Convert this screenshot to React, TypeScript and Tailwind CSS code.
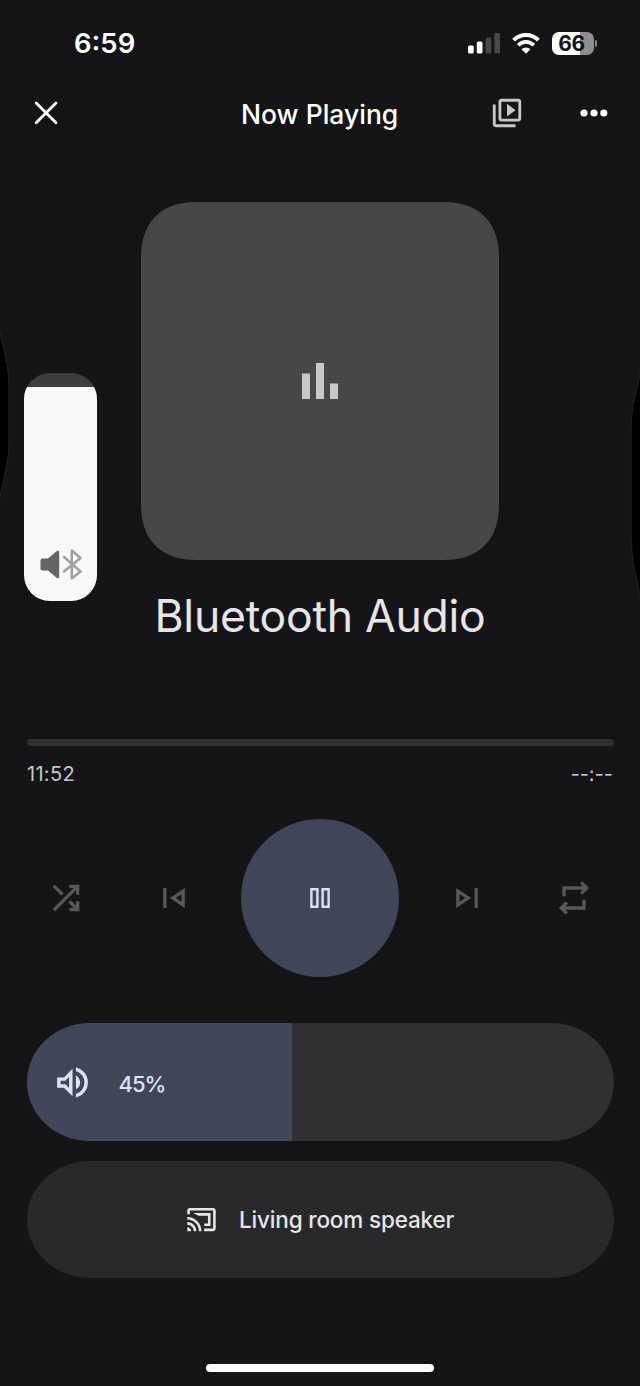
import type { ReactNode } from "react";

const MaterialIcon = ({ size, path, className = "" }: { size: number; path: string; className?: string }) => (
  <svg width={size} height={size} viewBox="0 -960 960 960" fill="currentColor" className={className}>
    <path d={path} />
  </svg>
);

const icons = {
  shuffle:
    "M560-160v-80h104L537-367l57-57 126 126v-102h80v240H560Zm-344 0-56-56 504-504H560v-80h240v240h-80v-104L216-160Zm151-377L160-744l56-56 207 207-56 56Z",
  previous: "M220-240v-480h80v480h-80Zm520 0L380-480l360-240v480Zm-80-240Zm0 90v-180l-136 90 136 90Z",
  next: "M660-240v-480h80v480h-80Zm-440 0v-480l360 240-360 240Zm80-240Zm0 90 136-90-136-90v180Z",
  repeat:
    "M280-80 120-240l160-160 56 58-62 62h406v-160h80v240H274l62 62-56 58Zm-80-440v-240h486l-62-62 56-58 160 160-160 160-56-58 62-62H280v160h-80Z",
  volume:
    "M560-131v-82q90-26 145-100t55-168q0-94-55-168T560-749v-82q124 28 202 125.5T840-481q0 127-78 224.5T560-131ZM120-360v-240h160l200-200v640L280-360H120Zm440 40v-322q47 22 73.5 66t26.5 96q0 51-26.5 94.5T560-320ZM400-606l-86 86H200v80h114l86 86v-252Z",
};

const StatusBar = () => (
  <div className="flex h-[86px] items-center pl-[74px] pr-[43px] text-white">
    <span className="flex-1 pt-0.5 text-[27.5px] leading-none font-semibold">6:59</span>
    <svg width="32" height="21" viewBox="0 0 32 21" className="mr-3">
      <rect x="0" y="12.5" width="5.7" height="8" rx="1.5" fill="#fff" />
      <rect x="8.8" y="8.5" width="5.7" height="12" rx="1.5" fill="#fff" />
      <rect x="17.6" y="4.5" width="5.7" height="16" rx="1.5" fill="#48484a" />
      <rect x="26.3" y="0" width="5.7" height="20.5" rx="1.5" fill="#48484a" />
    </svg>
    <svg width="28" height="21" viewBox="0 0 28 21" className="mr-3" fill="none" stroke="#fff">
      <path d="M1.6 7.2a17.6 17.6 0 0 1 24.8 0" strokeWidth="4" />
      <path d="M6.2 12.2a11 11 0 0 1 15.6 0" strokeWidth="3.7" />
      <path d="M14 20.8l-4.5-4.5a6.4 6.4 0 0 1 9 0z" fill="#fff" stroke="none" />
    </svg>
    <div className="flex h-[23px] w-[42px] items-center justify-center rounded-[7px] bg-linear-to-r from-white from-66% to-[#8e8e8e] to-66% pr-0.5 text-[21px] leading-none font-bold tracking-[-0.5px] text-[#151517]">
      66
    </div>
    <div className="ml-px h-[7px] w-[2.5px] rounded-r-full bg-[#8e8e8e]" />
  </div>
);

const Header = () => (
  <div className="flex h-[54px] items-center pl-[34px] text-white">
    <svg width="24" height="24" viewBox="0 0 24 24" stroke="currentColor" strokeWidth="2.8" strokeLinecap="round">
      <path d="M2.2 2l19.8 19.8M22 2L2.2 21.8" />
    </svg>
    <h1 className="ml-[183px] w-[162px] pt-[3px] text-[26.5px] leading-none font-medium whitespace-nowrap">
      Now Playing
    </h1>
    <svg width="34" height="34" viewBox="0 0 24 24" fill="#c7c7c9" className="ml-[87px] shrink-0">
      <path d="M4 6H2v14c0 1.1.9 2 2 2h14v-2H4V6zm16-4H8c-1.1 0-2 .9-2 2v12c0 1.1.9 2 2 2h12c1.1 0 2-.9 2-2V4c0-1.1-.9-2-2-2zm0 14H8V4h12v12zM12 5.5v9l6-4.5z" />
    </svg>
    <svg width="28" height="8" viewBox="0 0 28 8" fill="currentColor" className="ml-14 shrink-0">
      <circle cx="4" cy="4" r="3.6" />
      <circle cx="14" cy="4" r="3.6" />
      <circle cx="23.8" cy="4" r="3.6" />
    </svg>
  </div>
);

const Artwork = () => (
  <div className="mx-auto mt-[62px] flex size-[358px] items-center justify-center rounded-[57px] bg-[#464746] [corner-shape:superellipse(1.25)]">
    <svg width="36" height="36" viewBox="0 0 36 36" fill="#c7c9c7">
      <path d="M0 10.5h8V36H0zM14 0h8v36h-8zM28 20.5h8V36h-8z" />
    </svg>
  </div>
);

const Control = ({ children }: { children: ReactNode }) => (
  <button className="flex size-20 items-center justify-center text-[#58585a]">{children}</button>
);

const Controls = () => (
  <div className="mt-[33px] flex items-center justify-between">
    <Control>
      <MaterialIcon size={40} path={icons.shuffle} />
    </Control>
    <Control>
      <MaterialIcon size={40} path={icons.previous} />
    </Control>
    <button className="flex size-[158px] items-center justify-center rounded-full bg-[#424659]">
      <svg width="20" height="20" viewBox="0 0 20 20" fill="none" stroke="#dfe2fb" strokeWidth="2.4">
        <path d="M1.4 1.2h6v17.6h-6zM12.6 1.2h6v17.6h-6z" />
      </svg>
    </button>
    <Control>
      <MaterialIcon size={40} path={icons.next} />
    </Control>
    <Control>
      <MaterialIcon size={40} path={icons.repeat} />
    </Control>
  </div>
);

const VolumeSlider = () => (
  <div className="mx-[26.5px] mt-[46px] h-[118px] overflow-hidden rounded-[63px/59px] bg-[#303032]">
    <div className="flex h-full w-[265.5px] items-center bg-[#424659] pl-[25px] text-[#dfe2fb]">
      <MaterialIcon size={41} path={icons.volume} />
      <span className="mt-[3px] ml-[26px] text-[22px] leading-none font-medium tracking-[-1px]">45%</span>
    </div>
  </div>
);

const SpeakerButton = () => (
  <button className="mx-[26.5px] mt-5 flex h-[117px] items-center justify-center rounded-[63px/58px] bg-[#29292b] text-[#e6e6e8]">
    <svg width="31" height="31" viewBox="0 0 24 24" fill="currentColor">
      <path d="M1 18v3h3c0-1.66-1.34-3-3-3zm0-4v2c2.76 0 5 2.24 5 5h2c0-3.87-3.13-7-7-7zM1 10v2c4.97 0 9 4.03 9 9h2c0-6.08-4.93-11-11-11zM21 3H3c-1.1 0-2 .9-2 2v3h2V5h18v14h-7v2h7c1.1 0 2-.9 2-2V5c0-1.1-.9-2-2-2z" />
      <path d="M5.5 7H19v10h-4.8v-2H17V9H9.5Q7.6 7.8 5.5 7z" />
    </svg>
    <span className="ml-[22px] pt-0.5 text-[22.5px] leading-none font-medium tracking-[-0.16px]">
      Living room speaker
    </span>
  </button>
);

const SystemVolume = () => (
  <div className="absolute top-[373px] left-6 flex h-[228px] w-[73px] flex-col overflow-hidden rounded-[26px] bg-[#3d3d3f]">
    <div className="mt-[14px] flex flex-1 items-end justify-center bg-[#f8f8f8] pb-5">
      <svg width="42" height="32" viewBox="0 0 42 32">
        <path
          d="M2.5 9.5h5.5L16.5 2.3q2.7-1.6 2.7 1v24.4q0 2.6-2.7 1L8 21.5H2.5Q.5 21.5.5 19.5v-8q0-2 2-2z"
          fill="#646464"
        />
        <path
          d="M24 8l16.5 14.5L31.8 29.5V1.5L40.5 9 24 22.5"
          fill="none"
          stroke="#a0a0a0"
          strokeWidth="2.5"
          strokeLinejoin="round"
          strokeLinecap="round"
        />
      </svg>
    </div>
  </div>
);

const App = () => {
  return (
    <div className="relative flex h-[1386px] w-[640px] flex-col overflow-hidden bg-[#151517] font-['Inter',sans-serif]">
      <StatusBar />
      <Header />
      <Artwork />
      <h2 className="mt-[29px] text-center text-[44.5px] leading-[54px] tracking-[-0.25px] text-[#e6e6e8]">
        Bluetooth Audio
      </h2>
      <div className="mx-[26.5px] mt-24 h-[7px] rounded-full bg-[#303032]" />
      <div className="mx-[27px] mt-4 flex h-6 items-center justify-between text-[20px] text-[#c7c7c9]">
        <span className="tracking-[0.3px]">11:52</span>
        <span>--:--</span>
      </div>
      <div className="mx-[26px]">
        <Controls />
      </div>
      <VolumeSlider />
      <SpeakerButton />
      <div className="mx-auto mt-[86px] h-2 w-[228px] rounded-full bg-white" />

      <svg width="12" height="190" viewBox="0 0 12 190" className="absolute top-[320px] left-0" fill="#000" stroke="#242426">
        <path d="M-1 5C2 30 9 38 9 70v48c0 32-7 38-10 68z" />
      </svg>
      <svg width="12" height="250" viewBox="0 0 12 250" className="absolute top-[360px] right-0" fill="#000" stroke="#242426">
        <path d="M13 5C10 35 3 38 3 75v95c0 40 7 45 10 75z" />
      </svg>
      <SystemVolume />
    </div>
  );
};

export default App;
